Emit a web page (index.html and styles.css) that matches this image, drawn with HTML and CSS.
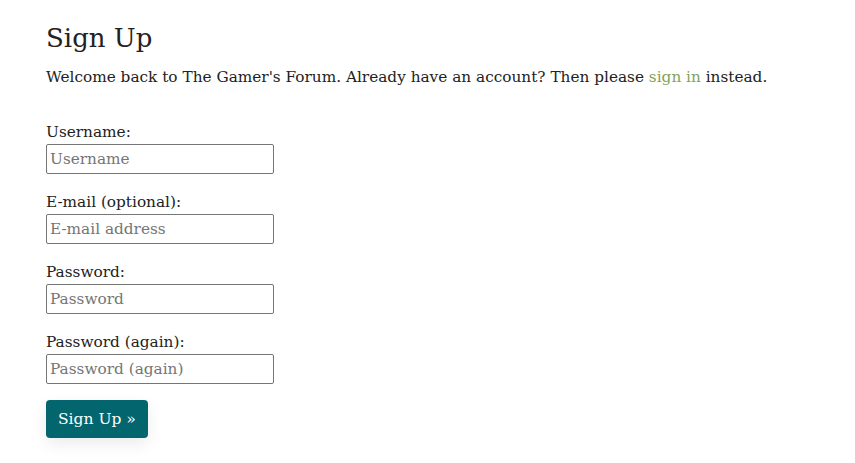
FILE: index.html
```html
<!DOCTYPE html>
<html>
<head>
<meta charset="utf-8">
<link rel="stylesheet" href="styles.css">
</head>
<body>
<main class="page">
  <h1 class="title">Sign Up</h1>
  <p class="intro">Welcome back to The Gamer's Forum. Already have an account? Then please <a class="link" href="#">sign in</a> instead.</p>
  <form class="form">
    <div class="field">
      <label class="label">Username:</label>
      <input class="input" type="text" placeholder="Username">
    </div>
    <div class="field">
      <label class="label">E-mail (optional):</label>
      <input class="input" type="text" placeholder="E-mail address">
    </div>
    <div class="field">
      <label class="label">Password:</label>
      <input class="input" type="password" placeholder="Password">
    </div>
    <div class="field">
      <label class="label">Password (again):</label>
      <input class="input" type="password" placeholder="Password (again)">
    </div>
    <button class="btn" type="button">Sign Up »</button>
  </form>
</main>
</body>
</html>
```

FILE: styles.css
```css
html, body {
  margin: 0;
  padding: 0;
  background: #ffffff;
}
body {
  font-family: "DejaVu Serif", serif;
  color: #222222;
  font-size: 15.3px;
}
.page {
  padding: 20px 46px;
}
.title {
  margin: 0;
  font-weight: 400;
  font-size: 26px;
  line-height: 36px;
}
.intro {
  margin: 8px 0 0 0;
  line-height: 26px;
}
.link {
  color: #7fa35a;
  text-decoration: none;
}
.form {
  margin-top: 30px;
  display: flex;
  flex-direction: column;
  align-items: flex-start;
}
.field {
  display: flex;
  flex-direction: column;
  margin-bottom: 16px;
}
.label {
  line-height: 24px;
}
.input {
  box-sizing: border-box;
  width: 228px;
  height: 30px;
  margin: 0;
  border: 1px solid #767676;
  border-radius: 2px;
  padding: 0 3px;
  font-family: "DejaVu Serif", serif;
  font-size: 15.3px;
  color: #222;
}
.input::placeholder {
  color: #757575;
}
.btn {
  margin-top: 0;
  height: 38px;
  padding: 0 12px;
  background: #03666f;
  color: #ffffff;
  border: none;
  border-radius: 4px;
  font-family: "DejaVu Serif", serif;
  font-size: 15.5px;
  box-shadow: 0 6px 16px rgba(0,0,0,0.08);
}
```
